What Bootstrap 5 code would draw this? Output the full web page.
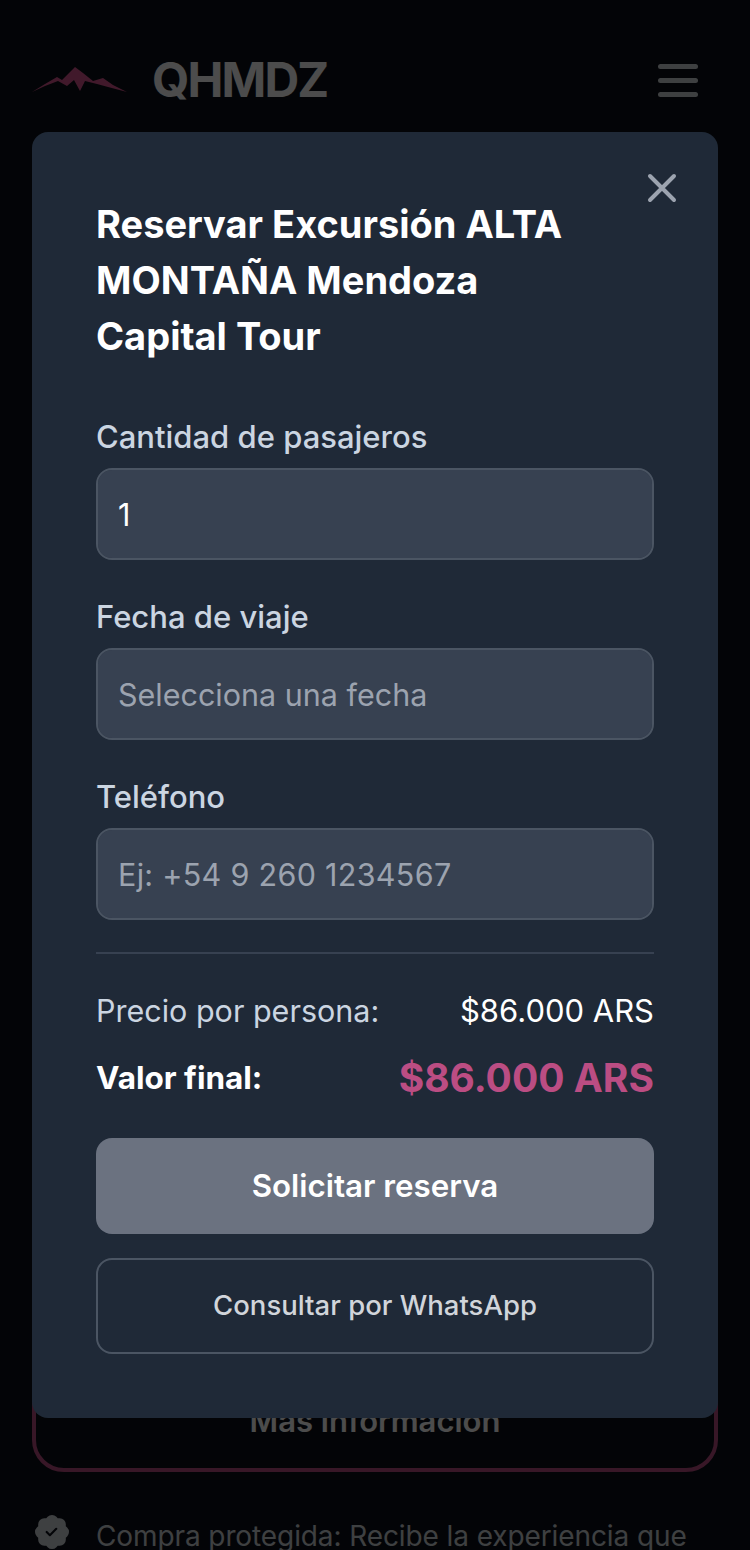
<!DOCTYPE html>
<html lang="es">

<head>
    <meta charset="UTF-8">
    <meta name="viewport" content="width=device-width, initial-scale=1.0">
    <title>QHMDZ</title>
    <link href="https://cdn.jsdelivr.net/npm/bootstrap@5.3.0/dist/css/bootstrap.min.css" rel="stylesheet">
    <style>
        html, body {
            height: 100%;
        }

        body {
            background-color: #0b1018;
            font-family: "Inter", "Liberation Sans", sans-serif;
            overflow: hidden;
            color: #fff;
        }

        /* page behind the overlay */
        .page-head {
            height: 160px;
            padding: 0 52px 0 32px;
        }

        .brand-name {
            font-size: 48px;
            font-weight: 700;
            line-height: 1;
            margin-left: 24px;
            letter-spacing: -1.8px;
        }

        .burger {
            width: 40px;
        }

        .burger span {
            display: block;
            height: 5px;
            border-radius: 3px;
            background-color: #d1d5db;
            margin-bottom: 9px;
        }

        .burger span:last-child {
            margin-bottom: 0;
        }

        .page-body {
            padding: 0 32px;
        }

        .more-btn {
            height: 1312px;
            border: 4px solid #bb4d83;
            border-radius: 32px;
            font-size: 31px;
            font-weight: 600;
            padding-bottom: 24px;
        }

        .guarantee {
            margin-top: 44px;
            gap: 27px;
            font-size: 28px;
            line-height: 40px;
            letter-spacing: -0.1px;
            color: #d1d5db;
        }

        .guarantee svg {
            flex: none;
            margin-top: -1px;
            margin-left: 3px;
        }

        /* overlay and dialog */
        .overlay {
            position: fixed;
            inset: 0;
            background-color: rgba(0, 0, 0, 0.7);
        }

        .dialog-box {
            position: absolute;
            left: 32px;
            top: 132px;
            width: 686px;
            height: 1286px;
            padding: 64px;
            background-color: #1f2937;
            border-radius: 16px;
        }

        .close-x {
            position: absolute;
            top: 40px;
            right: 40px;
            line-height: 0;
            color: #9ca3af;
        }

        .dialog-title {
            font-size: 38px;
            line-height: 56px;
            font-weight: 700;
            margin: 0 0 53px;
            padding-right: 48px;
        }

        .field-label {
            display: block;
            font-size: 31px;
            line-height: 40px;
            font-weight: 500;
            color: #cbd5e1;
            margin-bottom: 11px;
        }

        .field-input.form-control {
            height: 92px;
            background-color: #374151;
            border: 2px solid #4b5563;
            border-radius: 16px;
            padding: 0 20px;
            font-size: 30.5px;
            color: #fff;
            box-shadow: none;
        }

        .field-input.form-control::placeholder {
            color: #9ca3af;
            opacity: 1;
        }

        .phone-input {
            letter-spacing: 0.3px;
        }

        .field-wrap {
            margin-bottom: 37px;
        }

        .price-rule {
            margin: 32px 0 35px;
            border: 0;
            border-top: 2px solid #374151;
            opacity: 1;
        }

        .price-line {
            font-size: 31px;
            line-height: 44px;
            margin-bottom: 23px;
        }

        .price-label {
            color: #cbd5e1;
            font-size: 30.5px;
        }

        .final-line {
            margin-bottom: 38px;
        }

        .final-label {
            font-weight: 700;
            font-size: 31.5px;
        }

        .final-value {
            font-size: 39px;
            font-weight: 700;
            color: #bb4d83;
        }

        .send-btn.btn {
            height: 96px;
            background-color: #6b7280;
            border: 0;
            border-radius: 16px;
            font-size: 31.3px;
            font-weight: 600;
            color: #fff;
            margin-bottom: 24px;
        }

        .wa-btn.btn {
            height: 96px;
            background: transparent;
            border: 2px solid #4b5563;
            border-radius: 16px;
            font-size: 27.5px;
            font-weight: 500;
            color: #d1d5db;
        }
    </style>
</head>

<body>
    <!-- Page behind the modal -->
    <header class="page-head d-flex align-items-center justify-content-between">
        <div class="d-flex align-items-center">
            <svg width="96" height="30" viewBox="0 0 96 30" fill="#d9568f">
                <path d="M0 27 L13 19 L25 12 L30 15 L43 2 L51 8 L61 16 L71 13 L81 20 L95 27 L76 22 L65 19 L53 16 L48 26 L42 15 L35 21 L26 16 L13 21 Z"/>
            </svg>
            <span class="brand-name">QHMDZ</span>
        </div>
        <div class="burger"><span></span><span></span><span></span></div>
    </header>

    <main class="page-body">
        <div class="more-btn d-flex align-items-end justify-content-center">Más información</div>
        <div class="guarantee d-flex">
            <svg width="34" height="34" viewBox="0 0 16 16" fill="#d1d5db">
                <path d="M10.067.87a2.89 2.89 0 0 0-4.134 0l-.622.638-.89-.011a2.89 2.89 0 0 0-2.924 2.924l.01.89-.636.622a2.89 2.89 0 0 0 0 4.134l.637.622-.011.89a2.89 2.89 0 0 0 2.924 2.924l.89-.01.622.636a2.89 2.89 0 0 0 4.134 0l.622-.637.89.011a2.89 2.89 0 0 0 2.924-2.924l-.01-.89.636-.622a2.89 2.89 0 0 0 0-4.134l-.637-.622.011-.89a2.89 2.89 0 0 0-2.924-2.924l-.89.01-.622-.636zm.287 5.984-3 3a.5.5 0 0 1-.708 0l-1.5-1.5a.5.5 0 1 1 .708-.708L7 8.793l2.646-2.647a.5.5 0 0 1 .708.708z"/>
            </svg>
            <span>Compra protegida: Recibe la experiencia que contrataste o te devolvemos tu dinero</span>
        </div>
    </main>

    <!-- Modal -->
    <div class="overlay">
        <div class="dialog-box">
            <div class="close-x">
                <svg width="32" height="32" viewBox="0 0 32 32" fill="none" stroke="currentColor" stroke-width="4" stroke-linecap="round">
                    <path d="M4 4 L28 28 M28 4 L4 28"/>
                </svg>
            </div>
            <h2 class="dialog-title">Reservar Excursión ALTA MONTAÑA Mendoza Capital Tour</h2>
            <form>
                <div class="field-wrap">
                    <label class="field-label" for="pax">Cantidad de pasajeros</label>
                    <input id="pax" class="form-control field-input" type="text" value="1">
                </div>
                <div class="field-wrap">
                    <label class="field-label" for="fecha">Fecha de viaje</label>
                    <input id="fecha" class="form-control field-input" type="text" placeholder="Selecciona una fecha">
                </div>
                <div>
                    <label class="field-label" for="tel">Teléfono</label>
                    <input id="tel" class="form-control field-input phone-input" type="text" placeholder="Ej: +54 9 260 1234567">
                </div>
                <hr class="price-rule">
                <div class="price-line d-flex justify-content-between align-items-center">
                    <span class="price-label">Precio por persona:</span>
                    <span>$86.000 ARS</span>
                </div>
                <div class="price-line final-line d-flex justify-content-between align-items-center">
                    <span class="final-label">Valor final:</span>
                    <span class="final-value">$86.000 ARS</span>
                </div>
                <button type="button" class="btn send-btn w-100 d-block">Solicitar reserva</button>
                <button type="button" class="btn wa-btn w-100 d-block">Consultar por WhatsApp</button>
            </form>
        </div>
    </div>

    <script src="https://cdn.jsdelivr.net/npm/bootstrap@5.3.0/dist/js/bootstrap.bundle.min.js"></script>
</body>

</html>
